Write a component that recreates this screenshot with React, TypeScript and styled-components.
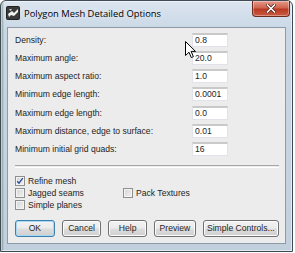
import { Fragment } from "react";
import styled, { createGlobalStyle } from "styled-components";

const GlobalStyle = createGlobalStyle`
  html, body {
    margin: 0;
    padding: 0;
    background: #ffffff;
  }
  body {
    font-family: "Liberation Sans", Arial, sans-serif;
  }
`;

const fields: Array<[string, string]> = [
  ["Density:", "0.8"],
  ["Maximum angle:", "20.0"],
  ["Maximum aspect ratio:", "1.0"],
  ["Minimum edge length:", "0.0001"],
  ["Maximum edge length:", "0.0"],
  ["Maximum distance, edge to surface:", "0.01"],
  ["Minimum initial grid quads:", "16"],
];

const buttons: Array<{ label: string; width: number; primary?: boolean }> = [
  { label: "OK", width: 40, primary: true },
  { label: "Cancel", width: 40 },
  { label: "Help", width: 39 },
  { label: "Preview", width: 42 },
  { label: "Simple Controls...", width: 77 },
];

const Window = styled.div`
  position: relative;
  box-sizing: border-box;
  width: 293px;
  height: 252px;
  display: flex;
  flex-direction: column;
  border: 1px solid #3f4a55;
  border-radius: 6px 6px 0 0;
  background:
    linear-gradient(90deg, rgba(40, 80, 50, 0.55) 0, rgba(40, 80, 50, 0) 3px),
    linear-gradient(180deg, #dbe5f0 0, #c9d7e5 30px, #c2d0de 100%);
  box-shadow: inset 0 0 0 1px rgba(255, 255, 255, 0.55);
`;

const TitleBar = styled.div`
  height: 26px;
  display: flex;
  align-items: flex-start;
  padding-left: 5px;
`;

const TitleIcon = styled.svg`
  width: 14px;
  height: 14px;
  margin-top: 5px;
  flex: none;
`;

const TitleText = styled.div`
  margin: 6px 0 0 4px;
  font-family: "Open Sans", "Liberation Sans", sans-serif;
  font-size: 9.4px;
  color: #000;
  line-height: 13px;
  text-shadow: 0 0 6px rgba(255, 255, 255, 0.9);
`;

const CloseButton = styled.div`
  margin-left: auto;
  margin-right: 2px;
  width: 38px;
  height: 16px;
  box-sizing: border-box;
  border: 1px solid #6b2a22;
  border-top: none;
  border-radius: 0 0 4px 4px;
  background: linear-gradient(180deg, #e49a8a 0, #d0644f 45%, #b93a24 55%, #cc5a42 100%);
  box-shadow: inset 0 0 0 1px rgba(255, 255, 255, 0.35);
  display: flex;
  align-items: center;
  justify-content: center;
`;

const Client = styled.div`
  flex: 1;
  margin: 0 6px 7px 6px;
  border: 1px solid #8d9aa8;
  background: #ececec;
  padding: 5px 6px 6px 7px;
  display: flex;
  flex-direction: column;
  font-size: 8.6px;
  color: #1e1e1e;
`;

const FieldGrid = styled.div`
  display: grid;
  grid-template-columns: 177px 36px;
  grid-auto-rows: 14px;
  row-gap: 4.15px;
  align-items: center;
`;

const Label = styled.div`
  white-space: nowrap;
  line-height: 14px;
`;

const Field = styled.div`
  box-sizing: border-box;
  height: 14px;
  background: #ffffff;
  border: 1px solid #e2e3ea;
  border-top: 2px solid #c9c9c9;
  padding: 0 0 0 2px;
  line-height: 11px;
  font-size: 8.6px;
`;

const Separator = styled.div`
  margin: 9px 0 0 0;
  height: 1px;
  border-top: 1px solid #a7a7a7;
  border-bottom: 1px solid #ffffff;
`;

const CheckGrid = styled.div`
  margin-top: 8px;
  display: grid;
  grid-template-columns: 108px 1fr;
  grid-auto-rows: 10px;
  row-gap: 2.3px;
`;

const CheckItem = styled.label<{ $col: number; $row: number }>`
  grid-column: ${(p) => p.$col};
  grid-row: ${(p) => p.$row};
  display: flex;
  align-items: center;
  gap: 3px;
  white-space: nowrap;
  line-height: 10px;
`;

const Box = styled.span`
  box-sizing: border-box;
  width: 10px;
  height: 10px;
  flex: none;
  border: 1px solid #8e8f8f;
  background: linear-gradient(135deg, #d4d4d4 0, #f2f2f2 100%);
  box-shadow: inset 0 0 0 1px #f4f4f4;
  display: flex;
  align-items: center;
  justify-content: center;
`;

const ButtonRow = styled.div`
  margin-top: auto;
  display: flex;
  gap: 7px;
`;

const Button = styled.div<{ $w: number; $primary?: boolean }>`
  box-sizing: border-box;
  width: ${(p) => p.$w}px;
  height: 17px;
  border: 1px solid ${(p) => (p.$primary ? "#3c7fb1" : "#707070")};
  border-radius: 3px;
  background: linear-gradient(180deg, #f2f2f2 0, #ebebeb 48%, #dddddd 52%, #cfcfcf 100%);
  box-shadow: inset 0 0 0 1px ${(p) => (p.$primary ? "#a7d9f5" : "#fcfcfc")};
  display: flex;
  align-items: center;
  justify-content: center;
  font-size: 8.6px;
  line-height: 15px;
`;

const Cursor = styled.svg`
  position: absolute;
  left: 184px;
  top: 40px;
  width: 11px;
  height: 18px;
`;

function Check({ checked }: { checked?: boolean }) {
  return (
    <Box>
      {checked && (
        <svg width="8" height="8" viewBox="0 0 8 8">
          <path d="M1.2 4.2 L3 6.2 L6.8 1.2" fill="none" stroke="#2a4f9b" strokeWidth="1.3" />
        </svg>
      )}
    </Box>
  );
}

export default function App() {
  return (
    <>
      <GlobalStyle />
      <Window>
        <TitleBar>
          <TitleIcon viewBox="0 0 14 14">
            <rect x="0.5" y="0.5" width="13" height="13" rx="1" fill="#3a3a3a" stroke="#222" />
            <path d="M2 8 L6 5 L8 7 L12 3 L12 6 L8 10 L5 9 L3 11 Z" fill="#f2f2f2" />
            <path d="M3 3 L6 3 L4.5 5 Z" fill="#cfcfcf" />
          </TitleIcon>
          <TitleText>Polygon Mesh Detailed Options</TitleText>
          <CloseButton>
            <svg width="10" height="9" viewBox="0 0 10 9">
              <path d="M1.5 1 L8.5 8 M8.5 1 L1.5 8" stroke="#4a1a14" strokeWidth="3" strokeLinecap="square" />
              <path d="M1.5 1 L8.5 8 M8.5 1 L1.5 8" stroke="#ffffff" strokeWidth="1.6" strokeLinecap="square" />
            </svg>
          </CloseButton>
        </TitleBar>
        <Client>
          <FieldGrid>
            {fields.map(([label, value]) => (
              <Fragment key={label}>
                <Label>{label}</Label>
                <Field>{value}</Field>
              </Fragment>
            ))}
          </FieldGrid>
          <Separator />
          <CheckGrid>
            <CheckItem $col={1} $row={1}>
              <Check checked />
              Refine mesh
            </CheckItem>
            <CheckItem $col={1} $row={2}>
              <Check />
              Jagged seams
            </CheckItem>
            <CheckItem $col={2} $row={2}>
              <Check />
              Pack Textures
            </CheckItem>
            <CheckItem $col={1} $row={3}>
              <Check />
              Simple planes
            </CheckItem>
          </CheckGrid>
          <ButtonRow>
            {buttons.map((b) => (
              <Button key={b.label} $w={b.width} $primary={b.primary}>
                {b.label}
              </Button>
            ))}
          </ButtonRow>
        </Client>
        <Cursor viewBox="0 0 11 18">
          <path d="M0.5 0.5 L0.5 14.5 L4 11.2 L6.3 16.6 L8.4 15.7 L6.1 10.4 L10.5 10.4 Z" fill="#ffffff" stroke="#000" strokeWidth="1" strokeLinejoin="round" />
        </Cursor>
      </Window>
    </>
  );
}
